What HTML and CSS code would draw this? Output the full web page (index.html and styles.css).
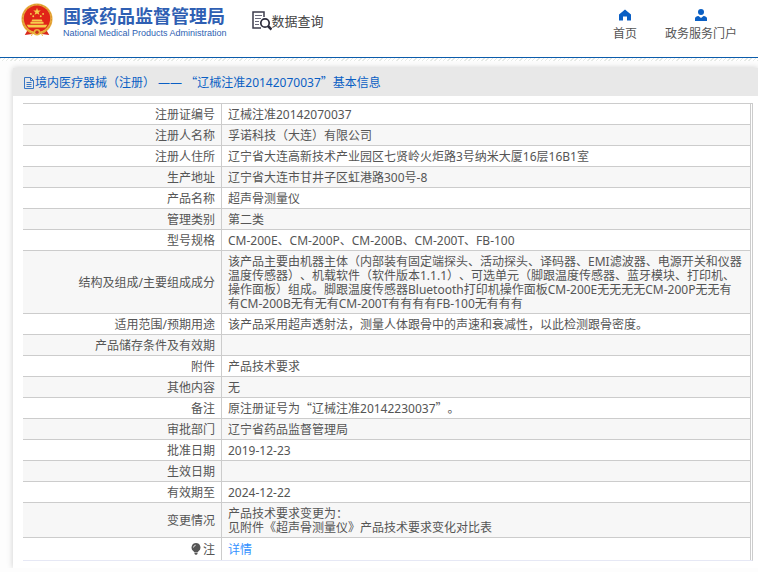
FILE: index.html
```html
<!DOCTYPE html>
<html lang="zh-CN">
<head>
  <meta charset="UTF-8" />
  <meta name="viewport" content="width=device-width, initial-scale=1.0"/>
  <title>国家药品监督管理局 数据查询</title>
  <link rel="stylesheet" href="styles.css">
</head>
<body>
  <header>
    <svg class="emblem" viewBox="0 0 34 36" aria-hidden="true">
      <path d="M8 27 L4 34 L12 33 L17 31 L22 33 L30 34 L26 27 Z" fill="#d8261c"/>
      <ellipse cx="17" cy="17" rx="16.500" ry="16.500" fill="#e9a93c"/>
      <ellipse cx="17" cy="17" rx="15.300" ry="15.300" fill="none" stroke="#d0902a" stroke-dasharray="2 2"/>
      <circle cx="17" cy="16.500" r="14" fill="#e02418"/>
      <path d="M17 5 L18 8 L21 8 L18.700 9.800 L19.500 12.500 L17 11 L14.500 12.500 L15.300 9.800 L13 8 L16 8 Z" fill="#f6ce4c"/>
      <g fill="#f6ce4c">
        <circle cx="10.500" cy="11.500" r="1"/><circle cx="13" cy="14" r="1"/>
        <circle cx="21" cy="14" r="1"/><circle cx="23.500" cy="11.500" r="1"/>
        <path d="M12 17.500 H22 L23 19.500 H11 Z"/>
        <path d="M10 20 H24 V22 H10 Z"/>
        <path d="M6 23 H28 L26 26 H8 Z"/>
      </g>
      <circle cx="17" cy="31" r="3.500" fill="#e9b13c"/>
      <circle cx="17" cy="31" r="1.800" fill="#c9351f"/>
      <path d="M8 29 L13 31 L11 35 M26 29 L21 31 L23 35" fill="none" stroke="#efb73f"/>
    </svg>
    <div class="brand">
      <h1>国家药品监督管理局</h1>
      <p>National Medical Products Administration</p>
    </div>
    <div class="query">
      <svg viewBox="0 0 20 20" aria-hidden="true">
        <path d="M9 17 H1 V1 H12 V6" fill="none" stroke="#3c3c4c" stroke-width="1.500"/>
        <path d="M3 4.500 H10 M3 7.500 H9 M3 10.500 H7 M3 13.500 H7" stroke="#6a6a7c" stroke-width="1.200"/>
        <circle cx="13" cy="12" r="4.200" fill="#fff" stroke="#2c2c3c" stroke-width="1.700"/>
        <path d="M16 15 L19.500 18.500" stroke="#2c2c3c" stroke-width="2.500"/>
      </svg>
      <span>数据查询</span>
    </div>
    <nav>
      <a href="#">
        <svg viewBox="0 0 12 12" aria-hidden="true"><path d="M6 .5 L12 5.500 V11.500 H8 V7.500 H4 V11.500 H0 V5.500 Z" fill="#0a5fc4"/></svg>
        首页
      </a>
      <a href="#">
        <svg viewBox="0 0 12 12" aria-hidden="true"><circle cx="6" cy="3" r="3" fill="#0a5fc4"/><path d="M0 12 V9.500 Q0 7.500 3.500 7 L6 9 L8.500 7 Q12 7.500 12 9.500 V12 Z" fill="#0a5fc4"/></svg>
        政务服务门户
      </a>
    </nav>
  </header>

  <main>
    <h2>
      <svg viewBox="0 0 10 12" aria-hidden="true"><path d="M.5 .5 H6.500 L9.500 3.500 V11.500 H.5 Z M6.500 .5 V3.500 H9.500 M2.500 5.500 H7.500 M2.500 7.500 H7.500 M2.500 9.500 H7.500" fill="none" stroke="#3a77c4"/></svg>
      <span>境内医疗器械（注册） —— <span class="wide">“</span>辽械注准20142070037<span class="wide">”</span>基本信息</span>
    </h2>
    <div class="table-wrap">
      <table>
        <tbody>
          <tr><th scope="row">注册证编号</th><td>辽械注准20142070037</td></tr>
          <tr><th scope="row">注册人名称</th><td>孚诺科技（大连）有限公司</td></tr>
          <tr><th scope="row">注册人住所</th><td>辽宁省大连高新技术产业园区七贤岭火炬路3号纳米大厦16层16B1室</td></tr>
          <tr><th scope="row">生产地址</th><td>辽宁省大连市甘井子区虹港路300号-8</td></tr>
          <tr><th scope="row">产品名称</th><td>超声骨测量仪</td></tr>
          <tr><th scope="row">管理类别</th><td>第二类</td></tr>
          <tr><th scope="row">型号规格</th><td>CM-200E、CM-200P、CM-200B、CM-200T、FB-100</td></tr>
          <tr><th scope="row">结构及组成/主要组成成分</th><td>该产品主要由机器主体（内部装有固定端探头、活动探头、译码器、EMI滤波器、电源开关和仪器温度传感器）、机载软件（软件版本1.1.1）、可选单元（脚跟温度传感器、蓝牙模块、打印机、操作面板）组成。脚跟温度传感器Bluetooth打印机操作面板CM-200E无无无无CM-200P无无有<br>有CM-200B无有无有CM-200T有有有有FB-100无有有有</td></tr>
          <tr><th scope="row">适用范围/预期用途</th><td>该产品采用超声透射法，测量人体跟骨中的声速和衰减性，以此检测跟骨密度。</td></tr>
          <tr><th scope="row">产品储存条件及有效期</th><td></td></tr>
          <tr><th scope="row">附件</th><td>产品技术要求</td></tr>
          <tr><th scope="row">其他内容</th><td>无</td></tr>
          <tr><th scope="row">备注</th><td>原注册证号为<span class="wide">“</span>辽械注准20142230037<span class="wide">”</span>。</td></tr>
          <tr><th scope="row">审批部门</th><td>辽宁省药品监督管理局</td></tr>
          <tr><th scope="row">批准日期</th><td>2019-12-23</td></tr>
          <tr><th scope="row">生效日期</th><td></td></tr>
          <tr><th scope="row">有效期至</th><td>2024-12-22</td></tr>
          <tr><th scope="row">变更情况</th><td>产品技术要求变更为：<br>见附件《超声骨测量仪》产品技术要求变化对比表</td></tr>
          <tr class="note">
            <th scope="row"><svg viewBox="0 0 10 12" aria-hidden="true"><path d="M5 0 A4.500 4.500 0 0 1 7.500 8.200 L6.500 9.500 H3.500 L2.500 8.200 A4.500 4.500 0 0 1 5 0 Z M3.500 10 H6.500 V11 L5 12 L3.500 11 Z" fill="#555"/><path d="M2.500 4.500 Q2.700 2.500 4.700 2.200" fill="none" stroke="#fff" stroke-width=".8"/></svg>注</th>
            <td><a href="#">详情</a></td>
          </tr>
        </tbody>
      </table>
    </div>
  </main>
</body>
</html>
```
FILE: styles.css
```css
:root {
  --blue: #0a5fc4;
  --text: #555;
  --border: #ccc;
  --stripe: #f7f7f7;
}
* {
  margin: 0;
  padding: 0;
  box-sizing: border-box;
}
body {
  background: #fdfdfd;
  color: var(--text);
  font-family: 'Noto Sans', 'Noto Sans CJK SC', sans-serif;
  font-size: 12px;
  line-height: 14px;
  text-spacing-trim: space-all;
}
a {
  text-decoration: none;
}
svg {
  display: block;
}
/* full-width quotes */
.wide {
  font-family: 'Noto Sans CJK SC', sans-serif;
  line-height: 1;
}
header {
  display: flex;
  align-items: flex-start;
  height: 61px;
  padding: 0 21px;
  /* blue rule with a hatched strip under it */
  background:
    linear-gradient(#fff, #fff) 0 0 / 100% 57px no-repeat,
    linear-gradient(#0b5cab, #0b5cab) 0 57px / 100% 1px no-repeat,
    repeating-linear-gradient(135deg, #fff 0 2px, #e6eae6 2px 3px);
}
.emblem {
  width: 32px;
  height: 36px;
  margin-top: 2px;
}
.brand {
  margin: 5px 0 0 10px;
  color: #2f5fb3;
}
.brand h1 {
  font-size: 18px;
  line-height: 22px;
  font-weight: bold;
}
.brand p {
  font-family: 'Liberation Sans', Arial, sans-serif;
  font-size: 9px;
  line-height: 12px;
}
.query {
  display: flex;
  align-items: center;
  margin: 11px 0 0 25px;
  color: #444;
  font-size: 13px;
  line-height: 20px;
}
.query svg {
  width: 20px;
  height: 20px;
}
nav {
  display: flex;
  gap: 28px;
  margin-left: auto;
  padding-top: 9px;
}
nav a {
  display: flex;
  flex-direction: column;
  align-items: center;
  gap: 6px;
  color: var(--text);
}
nav svg {
  width: 12px;
  height: 12px;
}
main {
  margin: 7px 0 0 13px;
  padding-bottom: 7px;
  background: #fff;
  box-shadow: 0 0 6px #ccc;
}
h2 {
  display: flex;
  align-items: center;
  gap: 1px;
  height: 28px;
  padding: 1px 0 0 11px;
  background: #e8e8e8;
  color: var(--blue);
  font-size: 12px;
  font-weight: normal;
}
h2 svg {
  width: 10px;
  height: 12px;
}
.table-wrap {
  margin: 7px 5px 0 10px;
  border-top: 1px solid var(--border);
  border-right: 1px solid var(--border);
  border-bottom: 1px solid #e6e8f5;
  padding-right: 1px;
}
table {
  width: 100%;
  border-collapse: separate;
  border-spacing: 0;
}
th, td {
  height: 21px;
  padding: 4px 6px 2px;
  border-right: 1px solid var(--border);
  border-bottom: 1px solid var(--border);
  vertical-align: middle;
}
th {
  width: 199px;
  font-weight: normal;
  text-align: right;
}
td {
  text-align: left;
}
tr:nth-child(even) {
  background: var(--stripe);
}
.note th, .note td {
  height: 22px;
  border-bottom: none;
}
.note svg {
  display: inline-block;
  width: 10px;
  height: 12px;
  margin-right: 2px;
  vertical-align: -1px;
}
.note a {
  color: #3391ff;
}
```
